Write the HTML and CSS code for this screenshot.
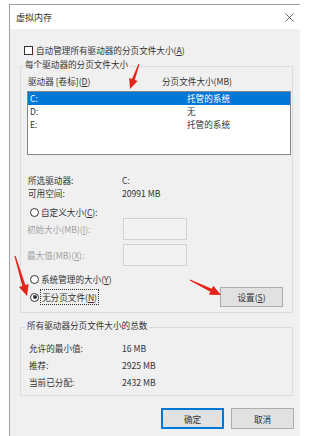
FILE: index.html
```html
<!DOCTYPE html>
<html lang="zh-CN">
<head>
<meta charset="utf-8">
<title>虚拟内存</title>
<link rel="stylesheet" href="styles.css">
</head>
<body>
<div class="window">
  <div class="titlebar">
    <span class="title">虚拟内存</span>
    <svg class="close" width="9" height="9" viewBox="0 0 9 9"><path d="M0.5 0.5L8.5 8.5M8.5 0.5L0.5 8.5" stroke="#555" stroke-width="0.9" fill="none"/></svg>
  </div>
  <div class="content">
    <div class="check-row">
      <span class="checkbox"></span>
      <span>自动管理所有驱动器的分页文件大小(<u>A</u>)</span>
    </div>

    <div class="group group-drives">
      <div class="gtitle">每个驱动器的分页文件大小</div>
      <div class="list-head">
        <span class="col1">驱动器 [卷标](<u>D</u>)</span>
        <span>分页文件大小(MB)</span>
      </div>
      <div class="listbox">
        <div class="lrow selected"><span class="lcol1">C:</span><span>托管的系统</span></div>
        <div class="lrow"><span class="lcol1">D:</span><span>无</span></div>
        <div class="lrow"><span class="lcol1">E:</span><span>托管的系统</span></div>
      </div>
      <div class="info">
        <div class="irow"><span class="ilabel">所选驱动器:</span><span>C:</span></div>
        <div class="irow"><span class="ilabel">可用空间:</span><span>20991 MB</span></div>
      </div>
      <div class="radio-row r-custom"><span class="radio"></span><span>自定义大小(<u>C</u>):</span></div>
      <div class="field-row"><span class="flabel">初始大小(MB)(<u>I</u>):</span><span class="fbox"></span></div>
      <div class="field-row"><span class="flabel">最大值(MB)(<u>X</u>):</span><span class="fbox"></span></div>
      <div class="radio-row r-system"><span class="radio"></span><span>系统管理的大小(<u>Y</u>)</span></div>
      <div class="none-row">
        <div class="radio-row"><span class="radio checked"></span><span class="focus">无分页文件(<u>N</u>)</span></div>
        <span class="btn btn-set">设置(<u>S</u>)</span>
      </div>
    </div>

    <div class="group group-total">
      <div class="gtitle">所有驱动器分页文件大小的总数</div>
      <div class="totals">
        <div class="trow"><span class="tlabel">允许的最小值:</span><span>16 MB</span></div>
        <div class="trow"><span class="tlabel">推荐:</span><span>2925 MB</span></div>
        <div class="trow"><span class="tlabel">当前已分配:</span><span>2432 MB</span></div>
      </div>
    </div>

    <div class="actions">
      <span class="btn btn-ok">确定</span>
      <span class="btn">取消</span>
    </div>
  </div>
</div>

<svg class="arrows" width="323" height="436" viewBox="0 0 323 436">
  <polygon fill="#e5231b" points="139.47,64.17 134.80,80.10 137.62,81.11 130,89 129.16,78.07 131.98,79.08 138.53,63.83"/>
  <polygon fill="#e5231b" points="15.57,255.83 25.37,285.00 28.63,284.02 27,296 19.05,286.90 22.31,285.92 14.43,256.17"/>
  <polygon fill="#e5231b" points="189.74,280.54 210.40,291.65 208.92,294.71 221,295 213.28,285.71 211.80,288.77 190.26,279.46"/>
</svg>
</body>
</html>
```

FILE: styles.css
```css
* { box-sizing: border-box; }
html, body { margin: 0; padding: 0; background: #fff; }
body {
  font-family: "Noto Sans CJK SC", "Noto Sans", sans-serif;
  font-size: 8.6px;
  color: #333;
  width: 323px;
  height: 436px;
  overflow: hidden;
  position: relative;
}
u { text-decoration: underline; text-underline-offset: 1px; }

.window {
  margin: 4px 0 0 9px;
  width: 291px;
  height: 432px;
  border-top: 1px solid #a0a0a0;
  border-left: 1px solid #a0a0a0;
  display: flex;
  flex-direction: column;
}
.titlebar {
  height: 24px;
  flex: none;
  background: #fff;
  display: flex;
  align-items: center;
  justify-content: space-between;
  padding: 0 6px 0 6px;
}
.title { font-size: 9px; color: #333; }
.close { display: block; }

.content {
  flex: 1;
  background: #f0f0f0;
  padding-top: 14px;
}

.check-row {
  height: 14px;
  margin-left: 14px;
  display: flex;
  align-items: center;
  gap: 3px;
}
.checkbox {
  width: 9px;
  height: 9px;
  border: 1px solid #333;
  background: #fff;
  flex: none;
}

.group {
  border: 1px solid #dcdcdc;
  margin: 0 7px 0 10px;
}
.group-drives { margin-top: 9px; padding: 0 1px 5px 6px; }
.group-total { margin-top: 14px; padding: 0 1px 4px 8px; }
.gtitle {
  width: max-content;
  margin: -10px 0 0 -4px;
  padding: 0 2px;
  height: 14px;
  line-height: 14px;
  background: #f0f0f0;
}

.list-head {
  height: 19px;
  display: flex;
  align-items: center;
  padding-left: 1px;
}
.col1 { width: 134px; }

.listbox {
  margin-top: 1px;
  height: 64px;
  border: 1px solid #828790;
  background: #fff;
}
.lrow {
  height: 13px;
  line-height: 13px;
  padding-left: 2px;
  display: flex;
}
.lrow.selected { background: #0078d7; color: #fff; }
.lcol1 { width: 157px; }

.info { margin-top: 19px; padding-left: 1px; }
.irow { height: 13px; line-height: 13px; display: flex; }
.ilabel { width: 94px; }

.radio-row {
  display: flex;
  align-items: center;
  gap: 2px;
  height: 12px;
}
.r-custom { margin-top: 6px; padding-left: 3px; }
.r-system { margin-top: 7px; padding-left: 3px; }
.radio {
  width: 9px;
  height: 9px;
  border: 1px solid #333;
  border-radius: 50%;
  background: #fff;
  flex: none;
  position: relative;
}
.radio.checked::after {
  content: "";
  position: absolute;
  left: 1.5px;
  top: 1.5px;
  width: 4px;
  height: 4px;
  border-radius: 50%;
  background: #333;
}

.field-row {
  height: 22px;
  display: flex;
  align-items: center;
  color: #a0a0a0;
}
.field-row + .field-row { margin-top: 4px; }
.flabel { width: 96px; }
.fbox {
  width: 64px;
  height: 22px;
  border: 1px solid #d2d2d2;
  background: #f2f2f2;
}

.none-row {
  margin-top: 2px;
  height: 20px;
  display: flex;
  align-items: center;
  justify-content: space-between;
  padding-left: 3px;
  padding-right: 8px;
}
.none-row .radio-row { height: 16px; }
.focus {
  border: 1px dotted #333;
  height: 16px;
  line-height: 14px;
  padding: 0 1px;
  margin-left: -1px;
}

.btn {
  width: 63px;
  height: 21px;
  border: 1px solid #adadad;
  background: #e1e1e1;
  display: flex;
  align-items: center;
  justify-content: center;
  color: #333;
}
.btn-set { height: 20px; }
.btn-ok { border: 2px solid #0078d7; }

.totals { margin-top: 8px; }
.trow { height: 17px; line-height: 17px; display: flex; }
.tlabel { width: 93px; }

.actions {
  margin-top: 12px;
  margin-right: 6px;
  display: flex;
  justify-content: flex-end;
  gap: 7px;
}

.arrows {
  position: absolute;
  left: 0;
  top: 0;
  pointer-events: none;
}
```
